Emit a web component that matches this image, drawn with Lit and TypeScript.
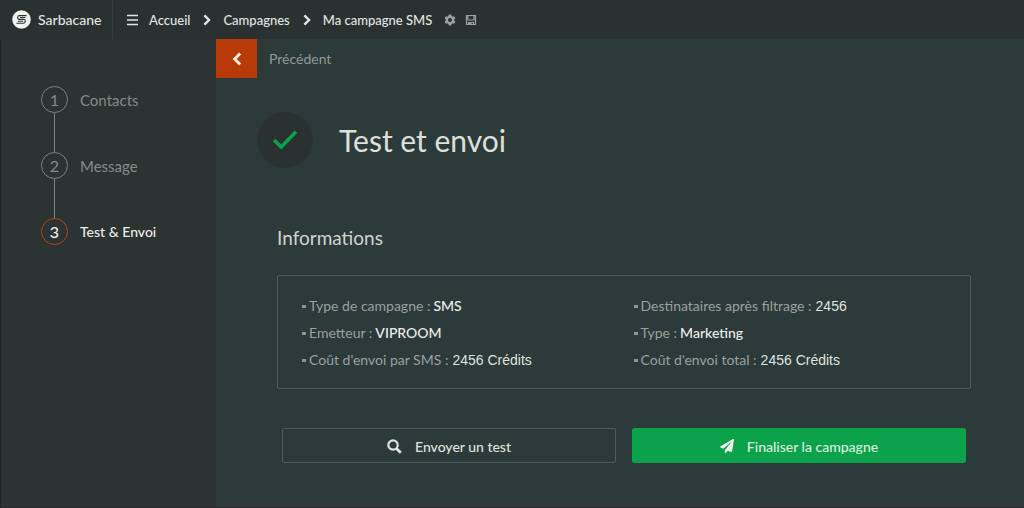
import { LitElement, html, css, svg } from "lit";
import { customElement, property } from "lit/decorators.js";

interface Step {
  label: string;
  active?: boolean;
}

interface Info {
  label: string;
  value: string;
  computed?: boolean;
}

const STEPS: Step[] = [
  { label: "Contacts" },
  { label: "Message" },
  { label: "Test & Envoi", active: true },
];

const INFOS: Info[] = [
  { label: "Type de campagne :", value: "SMS" },
  { label: "Destinataires après filtrage :", value: "2456", computed: true },
  { label: "Emetteur :", value: "VIPROOM" },
  { label: "Type :", value: "Marketing" },
  { label: "Coût d'envoi par SMS :", value: "2456 Crédits", computed: true },
  { label: "Coût d'envoi total :", value: "2456 Crédits", computed: true },
];

const chevron = html`<svg class="chevron" width="8" height="12" viewBox="0 0 8 12" aria-hidden="true">
  ${svg`<path d="M1.4 1.4 6 6 1.4 10.6" fill="none" stroke="currentColor" stroke-width="2.4" />`}
</svg>`;

@customElement("app-topbar")
export class AppTopbar extends LitElement {
  static styles = css`
    :host {
      display: flex;
      height: 39px;
      background: #2a3131;
      color: #e2e5e2;
      font-size: 13px;
      font-weight: 500;
    }
    a {
      color: inherit;
      text-decoration: none;
    }
    svg {
      display: block;
      flex: none;
    }
    .brand {
      display: flex;
      align-items: center;
      gap: 7px;
      box-sizing: border-box;
      width: 113px;
      padding-left: 12px;
      border-right: 1px solid #373e3e;
      font-size: 14px;
    }
    nav {
      display: flex;
      align-items: center;
      padding-left: 14px;
    }
    .home {
      display: flex;
      align-items: center;
      gap: 10px;
    }
    .chevron {
      margin: 0 12px 0 13px;
    }
    .tool {
      display: block;
      margin: 0 0 0 9px;
      padding: 0;
      border: 0;
      background: none;
      color: #9da3a0;
    }
    .tool.first {
      margin-left: 12px;
    }
  `;

  render() {
    return html`
      <a class="brand" href="#">
        <svg width="19" height="19" viewBox="0 0 19 19" aria-hidden="true">
          <circle cx="9.5" cy="9.5" r="9.3" fill="#f1f3ee" />
          <path
            d="M14.600 5.600H7.400C5.200 5.600 5 9.400 7.400 9.400h4.200c2.400 0 2.200 3.800 0 3.800H4.400M13.400 7.500H8M5.800 11.300h5.400"
            fill="none"
            stroke="#2a3131"
            stroke-width="1.100"
          />
        </svg>
        Sarbacane
      </a>
      <nav aria-label="Fil d'Ariane">
        <a class="home" href="#accueil">
          <svg width="12" height="12" viewBox="0 0 12 12" aria-hidden="true">
            <path d="M0 1.500h11M0 6h11M0 10.500h11" stroke="currentColor" stroke-width="1.400" />
          </svg>
          Accueil
        </a>
        ${chevron}
        <a href="#campagnes">Campagnes</a>
        ${chevron}
        <a href="#campagne" aria-current="page">Ma campagne SMS</a>
        <button class="tool first" type="button" aria-label="Paramètres">
          <svg width="12" height="12" viewBox="0 0 24 24" aria-hidden="true">
            <path
              fill="currentColor"
              fill-rule="evenodd"
              d="M9.500 1h5l.6 3.200 2.200 1.300 3-1.100 2.500 4.300-2.400 2.100v2.400l2.400 2.100-2.500 4.300-3-1.100-2.200 1.300-.6 3.200h-5l-.6-3.200-2.200-1.300-3 1.100-2.500-4.300 2.400-2.100v-2.400L1.200 8.700l2.500-4.300 3 1.100 2.200-1.300zM12 8a4 4 0 1 0 0 8 4 4 0 0 0 0-8z"
            />
          </svg>
        </button>
        <button class="tool" type="button" aria-label="Enregistrer">
          <svg width="12" height="12" viewBox="0 0 12 12" aria-hidden="true">
            <path
              d="M1.500 1.500h9v9h-9zM3 1.500v4.500h6V1.500M3.500 10.500V8.500h5v2"
              fill="none"
              stroke="currentColor"
              stroke-width="1.200"
            />
            <path d="M3.500 8.500h3v2h-3z" fill="currentColor" />
          </svg>
        </button>
      </nav>
    `;
  }
}

@customElement("app-steps")
export class AppSteps extends LitElement {
  static styles = css`
    :host {
      display: block;
      box-sizing: border-box;
      padding: 47px 0 0 40px;
      background: #2b3333;
      border-left: 1px solid #1f2626;
    }
    ol {
      margin: 0;
      padding: 0;
      list-style: none;
    }
    li {
      color: #858b89;
    }
    li + li::before {
      content: "";
      display: block;
      width: 1px;
      height: 39px;
      margin-left: 13px;
      background: #7d8482;
    }
    a {
      display: flex;
      align-items: center;
      gap: 12px;
      color: inherit;
      text-decoration: none;
      font-size: 15px;
    }
    .num {
      display: grid;
      place-items: center;
      box-sizing: border-box;
      width: 27px;
      height: 27px;
      border: 1px solid #7d8482;
      border-radius: 50%;
      font-size: 16px;
    }
    .active {
      color: #eceeec;
      font-size: 14px;
      font-weight: 500;
    }
    .active .num {
      border-color: #bd4316;
    }
  `;

  @property({ attribute: false }) steps: Step[] = [];

  render() {
    return html`
      <ol>
        ${this.steps.map(
          (step, i) => html`<li>
            <a class=${step.active ? "active" : ""} href="#etape-${i + 1}">
              <span class="num">${i + 1}</span>${step.label}
            </a>
          </li>`
        )}
      </ol>
    `;
  }
}

@customElement("app-root")
export class AppRoot extends LitElement {
  static styles = css`
    :host {
      display: flex;
      flex-direction: column;
      box-sizing: border-box;
      min-height: 100vh;
      border-bottom: 1px solid #2b282e;
      background: #2d3a3a;
      font-family: Lato, "Liberation Sans", sans-serif;
    }
    .body {
      display: flex;
      flex: 1;
    }
    app-steps {
      flex: none;
      width: 216px;
    }
    main {
      flex: 1;
      min-width: 0;
    }
    .back {
      display: inline-flex;
      align-items: center;
      gap: 12px;
      color: #939997;
      font-size: 14px;
      text-decoration: none;
    }
    .back-icon {
      display: grid;
      place-items: center;
      width: 41px;
      height: 39px;
      background: #b73a08;
      color: #f2efe9;
    }
    .heading {
      display: flex;
      align-items: center;
      gap: 26px;
      padding: 34px 0 0 41px;
    }
    .badge {
      display: grid;
      place-items: center;
      width: 56px;
      height: 56px;
      border-radius: 50%;
      background: #2a3131;
    }
    h1 {
      margin: 0;
      color: #dfe0da;
      font-size: 30px;
      font-weight: 400;
      line-height: 36px;
    }
    h2 {
      margin: 58px 0 0 61px;
      color: #d0d3cf;
      font-size: 19px;
      font-weight: 400;
      line-height: 24px;
    }
    .infos {
      display: grid;
      grid-template-columns: 331fr 311fr;
      row-gap: 7px;
      margin: 25px 53px 0 61px;
      padding: 20px 25px 18px 24px;
      border: 1px solid #505b5a;
      border-radius: 2px;
      list-style: none;
      color: #9ba19f;
      font-size: 14px;
      line-height: 20px;
    }
    .infos li {
      display: flex;
      align-items: center;
      gap: 3px;
      white-space: nowrap;
    }
    .infos li::before {
      content: "";
      width: 4px;
      height: 3px;
      background: #8d9492;
    }
    .value {
      color: #eceeec;
      font-weight: 500;
    }
    .value.computed {
      margin-left: 1px;
      color: #dfe2df;
      font-family: "Liberation Sans", sans-serif;
      font-weight: 400;
    }
    .actions {
      display: grid;
      grid-template-columns: 1fr 1fr;
      gap: 16px;
      margin: 39px 58px 44px 66px;
    }
    .actions button {
      display: flex;
      align-items: center;
      justify-content: center;
      gap: 13px;
      height: 35px;
      padding: 1px 0 0;
      border: 1px solid #505b5a;
      border-radius: 2px;
      background: none;
      color: #dfe2df;
      font-family: inherit;
      font-size: 14px;
      font-weight: 500;
    }
    .actions .primary {
      border-color: #0ca24b;
      background: #0ca24b;
      color: #dcefdf;
    }
  `;

  render() {
    return html`
      <app-topbar></app-topbar>
      <div class="body">
        <app-steps .steps=${STEPS}></app-steps>
        <main>
          <a class="back" href="#precedent">
            <span class="back-icon">
              <svg width="10" height="14" viewBox="0 0 10 14" aria-hidden="true">
                <path d="M8.200 1.400 2.600 7l5.600 5.600" fill="none" stroke="currentColor" stroke-width="2.800" />
              </svg>
            </span>
            Précédent
          </a>
          <header class="heading">
            <span class="badge">
              <svg width="26" height="20" viewBox="0 0 26 20" aria-hidden="true">
                <path d="M2 10 9.200 17 24 1.800" fill="none" stroke="#0ca24b" stroke-width="3.600" />
              </svg>
            </span>
            <h1>Test et envoi</h1>
          </header>
          <h2>Informations</h2>
          <ul class="infos">
            ${INFOS.map(
              (info) => html`<li>
                <span>${info.label}</span>
                <span class=${info.computed ? "value computed" : "value"}>${info.value}</span>
              </li>`
            )}
          </ul>
          <div class="actions">
            <button type="button">
              <svg width="15" height="15" viewBox="0 0 15 15" aria-hidden="true">
                <circle cx="6" cy="6" r="4.700" fill="none" stroke="currentColor" stroke-width="2.200" />
                <path d="m9.400 9.400 4.400 4.400" stroke="currentColor" stroke-width="2.800" />
              </svg>
              Envoyer un test
            </button>
            <button class="primary" type="button">
              <svg width="14" height="14" viewBox="0 0 512 512" aria-hidden="true">
                <path
                  fill="#f0f3ec"
                  d="M476 3.200 12.500 270.600c-18.100 10.400-15.800 35.600 2.200 43.200L121 358.400l287.300-253.200c5.500-4.900 13.300 2.600 8.600 8.300L176 407v80.500c0 23.600 28.500 32.900 42.500 15.800L282 426l124.600 52.200c14.200 6 30.400-2.900 33-18.200l72-432C515 7.800 493.300-6.800 476 3.200z"
                />
              </svg>
              Finaliser la campagne
            </button>
          </div>
        </main>
      </div>
    `;
  }
}
